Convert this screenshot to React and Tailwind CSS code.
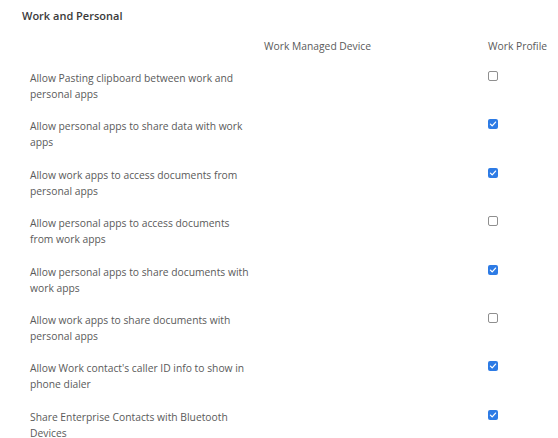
import { useState } from 'react'

const SETTINGS = [
  { label: 'Allow Pasting clipboard between work and personal apps', profile: false },
  { label: 'Allow personal apps to share data with work apps', profile: true },
  { label: 'Allow work apps to access documents from personal apps', profile: true },
  { label: 'Allow personal apps to access documents from work apps', profile: false },
  { label: 'Allow personal apps to share documents with work apps', profile: true },
  { label: 'Allow work apps to share documents with personal apps', profile: false },
  { label: "Allow Work contact's caller ID info to show in phone dialer", profile: true },
  { label: 'Share Enterprise Contacts with Bluetooth Devices', profile: true },
]

function Checkbox({ checked, onChange }) {
  return (
    <button
      type="button"
      onClick={onChange}
      className={
        checked
          ? 'block w-[10px] h-[10px] rounded-[2px] bg-[#2d7be5] flex items-center justify-center'
          : 'block w-[10px] h-[10px] rounded-[2px] border border-[#8f8f8f] bg-white'
      }
    >
      {checked && (
        <svg viewBox="0 0 10 10" className="w-[8px] h-[8px]">
          <path d="M1.8 5.2 L4 7.3 L8.2 2.6" fill="none" stroke="white" strokeWidth="1.6" strokeLinecap="round" strokeLinejoin="round" />
        </svg>
      )}
    </button>
  )
}

export default function App() {
  const [values, setValues] = useState(SETTINGS.map(s => s.profile))

  const toggle = (i) => {
    setValues(v => v.map((x, j) => (j === i ? !x : x)))
  }

  return (
    <div className="w-[558px] h-[438px] bg-white overflow-hidden px-[22px] pt-[8px] font-['Open_Sans',sans-serif] text-[#5a5a5a]">
      {/* Title */}
      <h2 className="text-[11px] leading-[16px] font-semibold text-[#3a3a3a]">Work and Personal</h2>

      {/* Column headers */}
      <div className="mt-[14px] grid grid-cols-[242px_224px_1fr] text-[10.3px] leading-[16px] whitespace-nowrap">
        <div />
        <div>Work Managed Device</div>
        <div>Work Profile</div>
      </div>

      {/* Rows */}
      <div className="mt-[8px]">
        {SETTINGS.map((s, i) => (
          <div key={i} className="h-[48.4px] pt-[8px] grid grid-cols-[242px_224px_1fr] text-[10.3px] leading-[16px]">
            <div className="pl-[8px] pr-[14px]">{s.label}</div>
            <div />
            <div className="pt-[1px]">
              <Checkbox checked={values[i]} onChange={() => toggle(i)} />
            </div>
          </div>
        ))}
      </div>
    </div>
  )
}
